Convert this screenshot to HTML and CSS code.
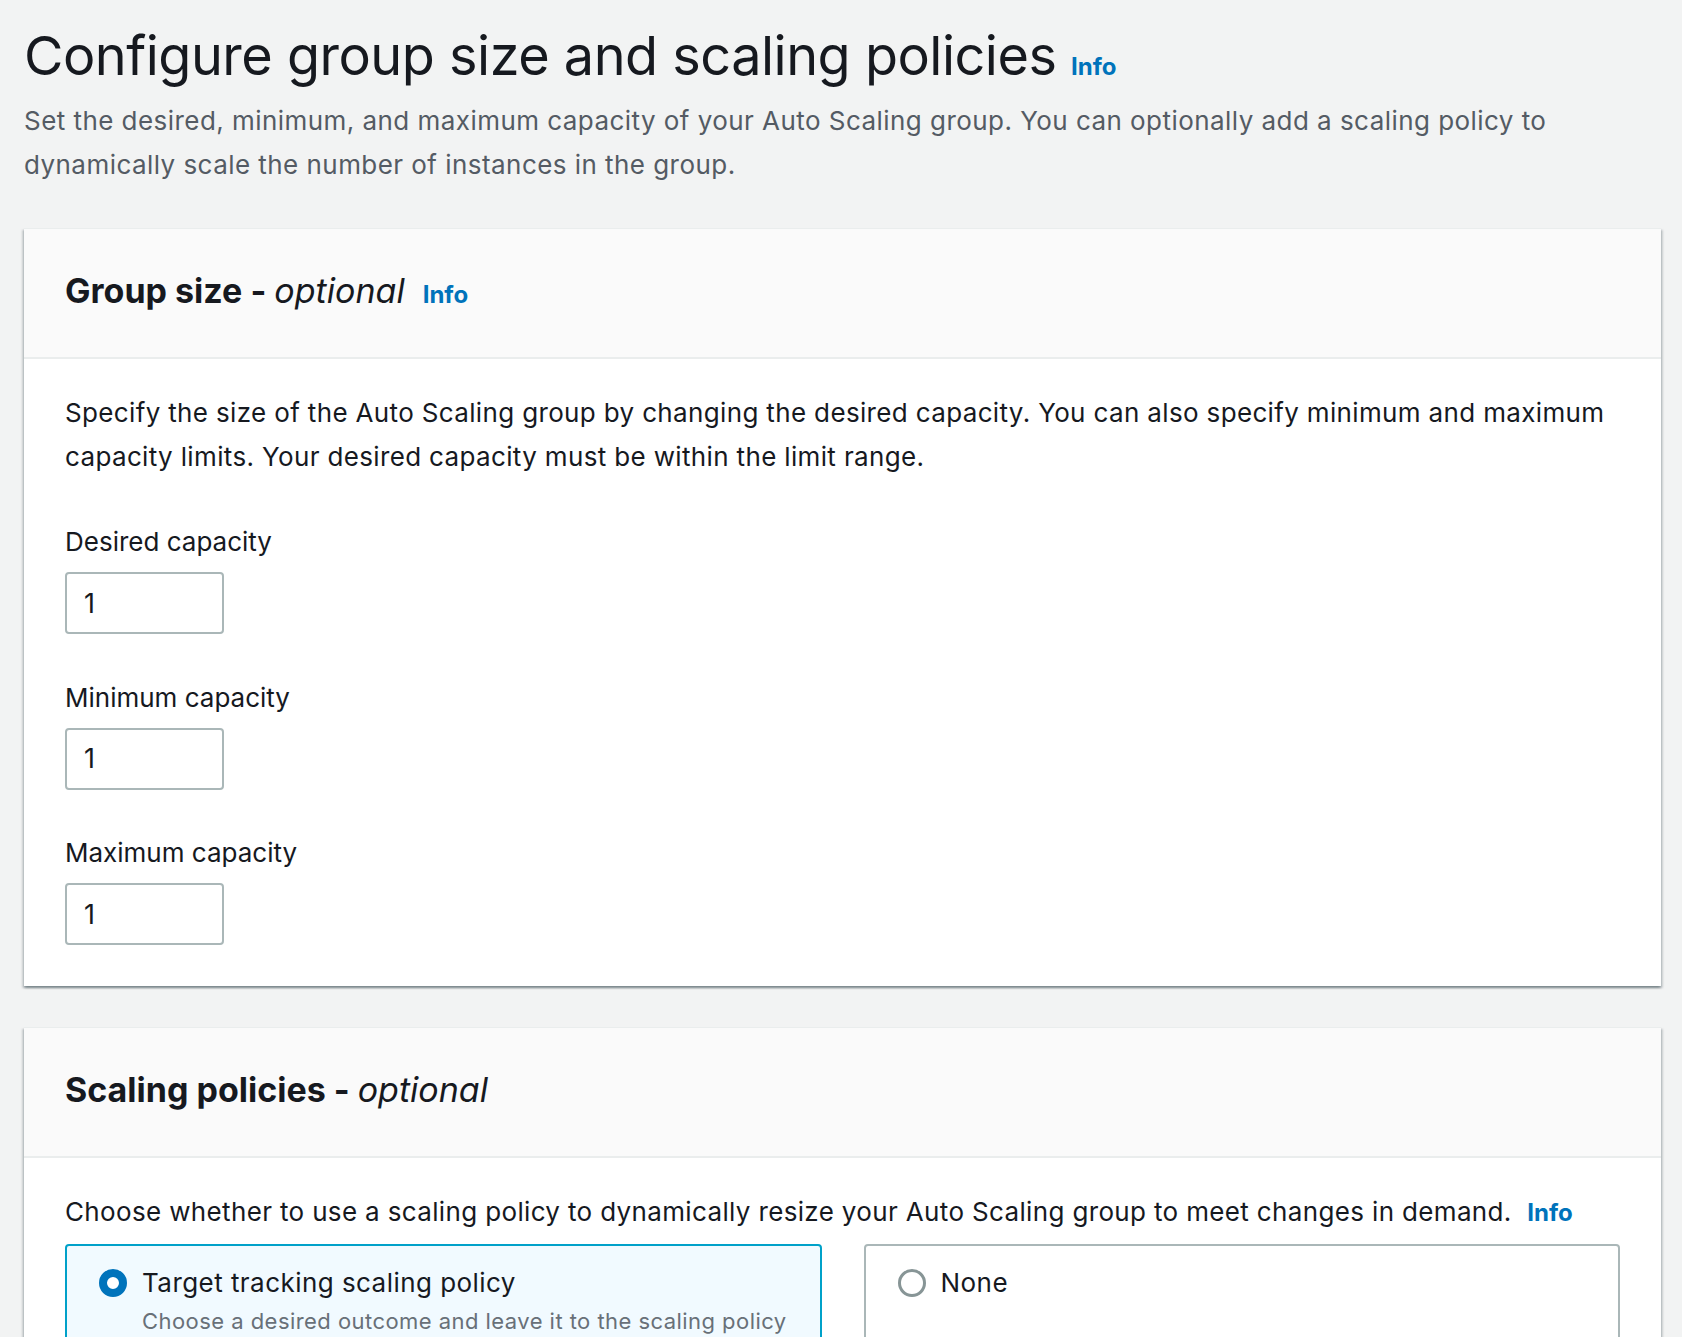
FILE: index.html
```html
<!DOCTYPE html>
<html lang="en">
<head>
<meta charset="utf-8">
<title>Configure group size and scaling policies</title>
<link rel="stylesheet" href="styles.css">
</head>
<body>
<main class="page">
  <header class="page-header">
    <h1 class="page-title">Configure group size and scaling policies <a class="info info-title" href="#">Info</a></h1>
    <p class="page-desc">Set the desired, minimum, and maximum capacity of your Auto Scaling group. You can optionally add a scaling policy to dynamically scale the number of instances in the group.</p>
  </header>

  <section class="card">
    <div class="card-header">
      <h2 class="card-title">Group size - <em>optional</em> <a class="info info-head" href="#">Info</a></h2>
    </div>
    <div class="card-body">
      <p class="body-text">Specify the size of the Auto Scaling group by changing the desired capacity. You can also specify minimum and maximum capacity limits. Your desired capacity must be within the limit range.</p>
      <div class="field">
        <label class="field-label" for="desired">Desired capacity</label>
        <input class="num-input" id="desired" type="text" value="1">
      </div>
      <div class="field">
        <label class="field-label" for="min">Minimum capacity</label>
        <input class="num-input" id="min" type="text" value="1">
      </div>
      <div class="field">
        <label class="field-label" for="max">Maximum capacity</label>
        <input class="num-input" id="max" type="text" value="1">
      </div>
    </div>
  </section>

  <section class="card card-second">
    <div class="card-header">
      <h2 class="card-title">Scaling policies - <em>optional</em></h2>
    </div>
    <div class="card-body">
      <p class="choice-label">Choose whether to use a scaling policy to dynamically resize your Auto Scaling group to meet changes in demand. <a class="info info-inline" href="#">Info</a></p>
      <div class="tiles">
        <div class="tile tile-selected">
          <span class="radio radio-on"></span>
          <div class="tile-text">
            <div class="tile-title">Target tracking scaling policy</div>
            <div class="tile-desc">Choose a desired outcome and leave it to the scaling policy</div>
          </div>
        </div>
        <div class="tile">
          <span class="radio"></span>
          <div class="tile-text">
            <div class="tile-title">None</div>
          </div>
        </div>
      </div>
    </div>
  </section>
</main>
</body>
</html>
```

FILE: styles.css
```css
* { box-sizing: border-box; }

html, body {
  margin: 0;
  padding: 0;
  background: #f2f3f3;
}

body {
  font-family: Inter, Lato, sans-serif;
  color: #16191f;
  height: 1337px;
  overflow: hidden;
}

.page {
  padding: 26px 21px 0 24px;
}

.page-title {
  margin: 0;
  font-size: 54px;
  line-height: 60px;
  font-weight: 400;
  letter-spacing: -0.5px;
  color: #16191f;
}

.info {
  color: #0073bb;
  font-weight: 700;
  text-decoration: none;
  letter-spacing: 0;
  line-height: 1;
}

.info-title {
  font-size: 24px;
  margin-left: 0;
}

.page-desc {
  margin: 13px 0 0;
  font-size: 26px;
  line-height: 44px;
  letter-spacing: 0.45px;
  color: #545b64;
}

.card {
  margin-top: 41px;
  background: #fff;
  border-top: 1px solid #eaeded;
  box-shadow: 0 2px 2px 0 rgba(0, 28, 36, 0.3), 2px 2px 2px 0 rgba(0, 28, 36, 0.15), -2px 2px 2px 0 rgba(0, 28, 36, 0.15);
}

.card-second {
  margin-top: 41px;
  min-height: 400px;
}

.card-header {
  background: #fafafa;
  border-bottom: 2px solid #eaeded;
  padding: 42px 41px 46px;
}

.card-title {
  margin: 0;
  font-size: 34px;
  line-height: 40px;
  font-weight: 700;
  letter-spacing: 0;
}

.card-title em {
  font-weight: 400;
  font-style: italic;
}

.info-head {
  font-size: 24px;
  margin-left: 10px;
}

.card-body {
  padding: 32px 41px 41px;
}

.body-text {
  margin: 0 0 41px;
  font-size: 26px;
  line-height: 44px;
  letter-spacing: 0.35px;
}

.field {
  display: flex;
  flex-direction: column;
  align-items: flex-start;
}

.field + .field {
  margin-top: 41.5px;
}

.field-label {
  font-size: 26px;
  line-height: 44px;
  margin-bottom: 8px;
}

.num-input {
  width: 159px;
  height: 62px;
  border: 2px solid #aab7b8;
  border-radius: 4px;
  padding: 0 17px;
  font-family: inherit;
  font-size: 27px;
  color: #16191f;
  background: #fff;
  outline: none;
}

.choice-label {
  margin: 0 0 10px;
  font-size: 26px;
  line-height: 44px;
  letter-spacing: 0.35px;
}

.info-inline {
  font-size: 24px;
  margin-left: 8px;
}

.tiles {
  display: grid;
  grid-template-columns: minmax(0, 1fr) minmax(0, 1fr);
  gap: 42px;
}

.tile {
  display: flex;
  align-items: flex-start;
  gap: 15px;
  border: 2px solid #aab7b8;
  border-radius: 4px;
  padding: 17px 16px 40px 32px;
  min-height: 200px;
  background: #fff;
}

.tile-selected {
  border-color: #00a1c9;
  background: #f1faff;
}

.radio {
  flex: none;
  width: 28px;
  height: 28px;
  margin-top: 6px;
  border-radius: 50%;
  border: 3px solid #879596;
  background: #fff;
}

.radio-on {
  border: 8px solid #0073bb;
  background: #fff;
}

.tile-text {
  min-width: 0;
}

.tile-title {
  font-size: 26px;
  line-height: 40px;
  letter-spacing: 0.45px;
}

.tile-desc {
  font-size: 22px;
  line-height: 36px;
  letter-spacing: 0.45px;
  color: #687078;
  white-space: nowrap;
}
```
